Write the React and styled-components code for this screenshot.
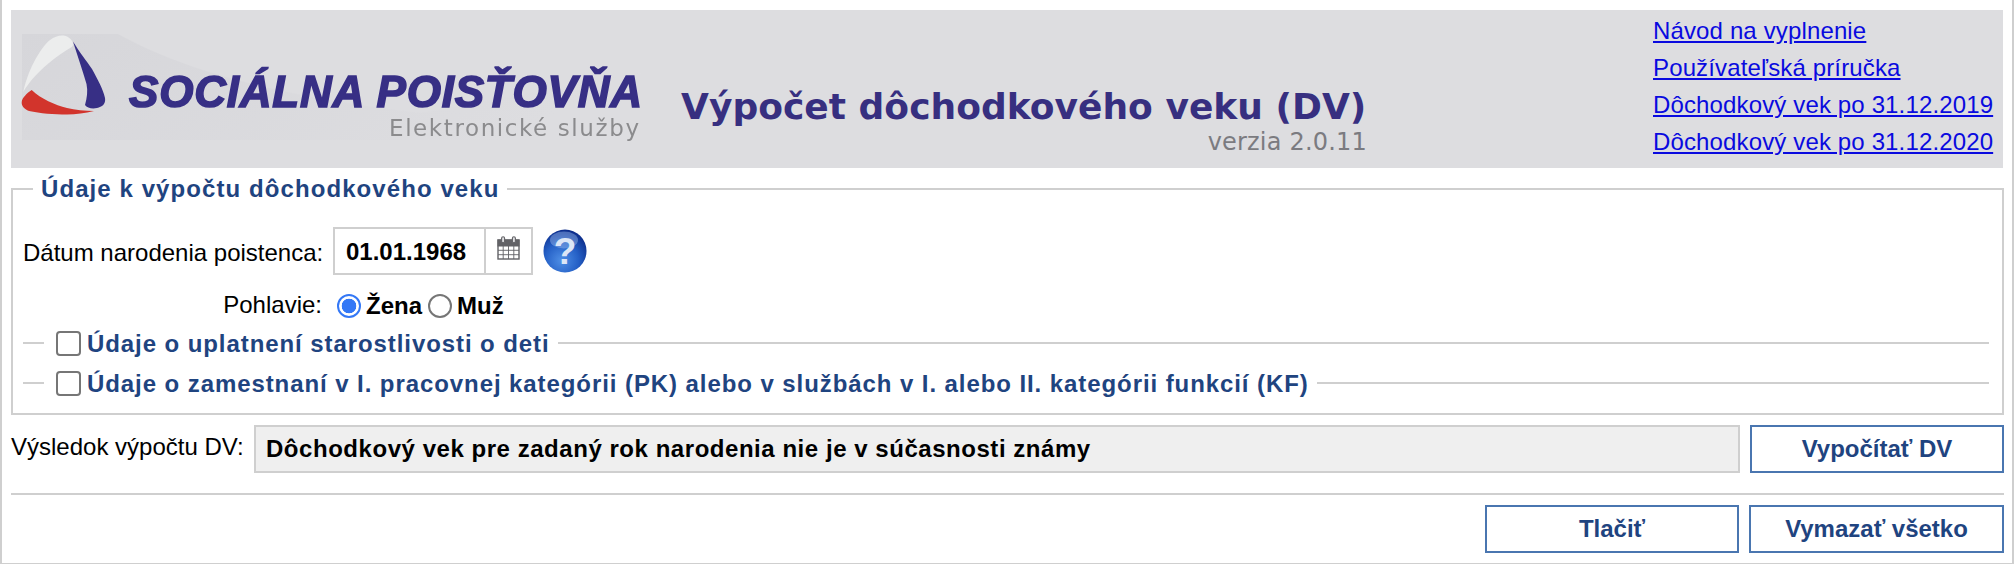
import React from "react";
import styled, { createGlobalStyle } from "styled-components";

const Global = createGlobalStyle`
  html, body { margin: 0; padding: 0; background: #fff; }
  body { font-family: "Liberation Sans", Arial, sans-serif; color: #000; }
  * { box-sizing: border-box; }
`;

const Frame = styled.div`
  width: 2014px;
  height: 564px;
  padding: 10px 9px 0 9px;
  border-left: 2px solid #cfcfcf;
  border-right: 2px solid #cfcfcf;
  border-bottom: 1px solid #cfcfcf;
  overflow: hidden;
`;

const Header = styled.header`
  display: flex;
  height: 158px;
  background: #dddde0;
`;

const LogoWrap = styled.div`
  flex: none;
  width: 640px;
  padding: 23px 0 0 10px;
`;

const LogoSvg = styled.svg`
  display: block;
  width: 625px;
  height: 115px;
  filter: blur(0.6px);
`;

const TitleBlock = styled.div`
  flex: none;
  width: 686px;
  margin-left: 30px;
  padding-top: 76px;
  display: flex;
  flex-direction: column;
  align-items: flex-end;
`;

const Title = styled.h1`
  margin: 0;
  width: 100%;
  font: bold 36px/42px "DejaVu Sans", Verdana, sans-serif;
  letter-spacing: 0.03px;
  color: #372f80;
  white-space: nowrap;
`;

const Version = styled.div`
  margin-top: 1px;
  font: 24px/26px "DejaVu Sans", Verdana, sans-serif;
  letter-spacing: 0.2px;
  color: #7b7b80;
`;

const Links = styled.nav`
  flex: none;
  margin-left: 286px;
  padding-top: 2px;
  display: flex;
  flex-direction: column;
`;

const DocLink = styled.a`
  font-size: 24px;
  line-height: 37px;
  letter-spacing: 0.14px;
  color: #0a0adf;
  text-decoration: underline;
  white-space: nowrap;
`;

const MainSet = styled.fieldset`
  margin: 9px 0 0 0;
  padding: 26px 10px 0 10px;
  height: 238px;
  width: 1993px;
  border: 2px solid #cfcfcf;
  min-inline-size: 0;
`;

const MainLegend = styled.legend`
  margin-left: 10px;
  padding: 0 8px;
  font-size: 24px;
  line-height: 24px;
  letter-spacing: 1.08px;
  font-weight: bold;
  color: #1f4480;
`;

const FieldRow = styled.div`
  display: flex;
  align-items: center;
  height: ${(p) => p.$h}px;
  margin-bottom: ${(p) => p.$mb || 0}px;
`;

const RowLabel = styled.label`
  flex: none;
  width: 299px;
  padding-top: ${(p) => p.$pt || 0}px;
  text-align: right;
  font-size: 24px;
  white-space: nowrap;
`;

const DateBox = styled.div`
  flex: none;
  display: flex;
  margin-left: 11px;
  width: 200px;
  height: 48px;
  border: 2px solid #cfcfcf;
`;

const DateInput = styled.input`
  width: 151px;
  border: 0;
  border-right: 2px solid #cfcfcf;
  padding: 2px 0 0 11px;
  font: bold 24px "Liberation Sans", Arial, sans-serif;
  color: #000;
  outline: none;
`;

const CalButton = styled.span`
  flex: 1;
  display: flex;
  align-items: center;
  justify-content: center;
  padding-bottom: 6px;
`;

const HelpIcon = styled.svg`
  flex: none;
  margin-left: 10px;
  width: 44px;
  height: 44px;
`;

const Radio = styled.input`
  appearance: none;
  flex: none;
  margin: 0;
  width: 24px;
  height: 24px;
  border-radius: 50%;
  border: 2px solid ${(p) => (p.checked ? "#3478f6" : "#767676")};
  background: ${(p) => (p.checked ? "radial-gradient(circle, #3478f6 0 7px, #fff 7.6px)" : "#fff")};
`;

const RadioText = styled.label`
  margin-left: 5px;
  margin-right: 6px;
  font-size: 24px;
  font-weight: bold;
`;

const RadioGroup = styled.div`
  display: flex;
  align-items: center;
  margin-left: 15px;
  padding-top: 1px;
`;

const SubSet = styled.fieldset`
  margin: 0 0 12px 0;
  padding: 0;
  width: 1966px;
  border: 0;
  border-top: 2px solid #cfcfcf;
  min-inline-size: 0;
  height: 28px;
`;

const SubLegend = styled.legend`
  display: flex;
  align-items: center;
  margin-left: 21px;
  padding: 0 8px 0 12px;
  height: 26px;
`;

const Check = styled.input`
  appearance: none;
  flex: none;
  margin: 0 6px 0 0;
  width: 25px;
  height: 25px;
  border: 2px solid #767676;
  border-radius: 4px;
  background: #fff;
`;

const SubTitle = styled.label`
  padding-top: 2px;
  font-size: 24px;
  letter-spacing: 0.92px;
  font-weight: bold;
  color: #1f4480;
  white-space: nowrap;
`;

const ResultRow = styled.div`
  display: flex;
  align-items: stretch;
  height: 48px;
  margin-top: 10px;
`;

const ResultLabel = styled.label`
  flex: none;
  width: 243px;
  padding-top: 8px;
  font-size: 24px;
  white-space: nowrap;
`;

const ResultField = styled.output`
  flex: none;
  width: 1486px;
  display: flex;
  align-items: center;
  padding: 0 10px;
  background: #efefef;
  border: 2px solid #cfcfcf;
  font-size: 24px;
  letter-spacing: 0.54px;
  font-weight: bold;
`;

const ActionButton = styled.button`
  flex: none;
  width: ${(p) => p.$w}px;
  height: 48px;
  background: #fff;
  border: 2px solid #4a76b0;
  border-radius: 0;
  font: bold 24px "Liberation Sans", Arial, sans-serif;
  color: #1f4480;
  margin-left: ${(p) => p.$ml || 0}px;
`;

const Divider = styled.hr`
  margin: 20px 0 10px 0;
  width: 1993px;
  border: 0;
  border-top: 2px solid #cfcfcf;
`;

const Footer = styled.div`
  display: flex;
  justify-content: flex-end;
  width: 1993px;
`;

function Logo() {
  return (
    <LogoSvg viewBox="0 0 625 115">
      <defs>
        <linearGradient id="sw" x1="0" y1="0" x2="1" y2="0.3">
          <stop offset="0" stopColor="#d6d6da" />
          <stop offset="1" stopColor="#dddde0" />
        </linearGradient>
      </defs>
      <path d="M1 1H97C150 30 230 60 400 80L620 40V107H1Z" fill="url(#sw)" />
      <path d="M41 2.5C46 2.5 50 5 52 10C52 12 52 13 50 14.5C32 25 12 42 2.3 59C6 40 18 16 29 7C33 4 37 2.5 41 2.5Z" fill="#eceded" />
      <path d="M52 8.5C59 20 65 27 71 36C77 47 82 56 84 65C85 71 81 74 76 75C71 76 66 75 64 72C66 65 67 58 65.5 51C63 42 57 24 52 8.5Z" fill="#372f85" />
      <path d="M10.7 57C20 66 34 72 46 75C54 77 64 78 73 78C64 80 55 81.5 46 81.5C33 81.5 19 80.5 8 78C3 76 0.4 73 0.7 69C1 65 6 60 10.7 57Z" fill="#d2342c" />
      <text x="108" y="74" textLength="513" lengthAdjust="spacing" stroke="#372f85" strokeWidth="1.6" fontFamily="'Liberation Sans', Arial, sans-serif" fontWeight="bold" fontStyle="italic" fontSize="44" fill="#372f85">SOCIÁLNA POISŤOVŇA</text>
      <text x="368" y="103" textLength="250" lengthAdjust="spacing" fontFamily="'DejaVu Sans', Verdana, sans-serif" fontSize="23" fill="#8b8b8d">Elektronické služby</text>
    </LogoSvg>
  );
}

function Calendar() {
  return (
    <svg width="23" height="24" viewBox="0 0 23 24" fill="none" stroke="#626266">
      <rect x="1" y="4" width="21" height="19" fill="#fff" strokeWidth="1.4" />
      <rect x="1" y="4" width="21" height="6" fill="#626266" strokeWidth="1" />
      <path d="M1 14.3H22M1 18.7H22M6.2 10V23M11.5 10V23M16.8 10V23" strokeWidth="0.9" />
      <rect x="4.6" y="0.8" width="3" height="6" rx="1.5" fill="#dddde0" strokeWidth="1.1" />
      <rect x="15.4" y="0.8" width="3" height="6" rx="1.5" fill="#dddde0" strokeWidth="1.1" />
    </svg>
  );
}

function Help() {
  return (
    <HelpIcon viewBox="0 0 44 44">
      <defs>
        <radialGradient id="hb" cx="0.42" cy="0.72" r="0.72">
          <stop offset="0" stopColor="#4f8fe6" />
          <stop offset="0.55" stopColor="#2560c6" />
          <stop offset="1" stopColor="#0c2c8a" />
        </radialGradient>
      </defs>
      <circle cx="22" cy="22" r="21.5" fill="url(#hb)" />
      <ellipse cx="21" cy="11" rx="14" ry="8.5" fill="#a8c6f2" opacity="0.4" />
      <text x="22" y="35" textAnchor="middle" fontFamily="'Liberation Sans', Arial, sans-serif" fontWeight="bold" fontSize="37" fill="#dce6f6">?</text>
    </HelpIcon>
  );
}

export default function App() {
  return (
    <Frame>
      <Global />
      <Header>
        <LogoWrap><Logo /></LogoWrap>
        <TitleBlock>
          <Title>Výpočet dôchodkového veku (DV)</Title>
          <Version>verzia 2.0.11</Version>
        </TitleBlock>
        <Links>
          <DocLink href="#">Návod na vyplnenie</DocLink>
          <DocLink href="#">Používateľská príručka</DocLink>
          <DocLink href="#">Dôchodkový vek po 31.12.2019</DocLink>
          <DocLink href="#">Dôchodkový vek po 31.12.2020</DocLink>
        </Links>
      </Header>
      <MainSet>
        <MainLegend>Údaje k výpočtu dôchodkového veku</MainLegend>
        <FieldRow $h={48} $mb={16}>
          <RowLabel $pt={4}>Dátum narodenia poistenca:</RowLabel>
          <DateBox>
            <DateInput defaultValue="01.01.1968" />
            <CalButton><Calendar /></CalButton>
          </DateBox>
          <Help />
        </FieldRow>
        <FieldRow $h={28} $mb={11}>
          <RowLabel>Pohlavie:</RowLabel>
          <RadioGroup>
            <Radio type="radio" name="g" checked readOnly />
            <RadioText>Žena</RadioText>
            <Radio type="radio" name="g" readOnly />
            <RadioText>Muž</RadioText>
          </RadioGroup>
        </FieldRow>
        <SubSet>
          <SubLegend><Check type="checkbox" /><SubTitle>Údaje o uplatnení starostlivosti o deti</SubTitle></SubLegend>
        </SubSet>
        <SubSet>
          <SubLegend><Check type="checkbox" /><SubTitle>Údaje o zamestnaní v I. pracovnej kategórii (PK) alebo v službách v I. alebo II. kategórii funkcií (KF)</SubTitle></SubLegend>
        </SubSet>
      </MainSet>
      <ResultRow>
        <ResultLabel>Výsledok výpočtu DV:</ResultLabel>
        <ResultField>Dôchodkový vek pre zadaný rok narodenia nie je v súčasnosti známy</ResultField>
        <ActionButton $w={254} $ml={10}>Vypočítať DV</ActionButton>
      </ResultRow>
      <Divider />
      <Footer>
        <ActionButton $w={254}>Tlačiť</ActionButton>
        <ActionButton $w={255} $ml={10}>Vymazať všetko</ActionButton>
      </Footer>
    </Frame>
  );
}
